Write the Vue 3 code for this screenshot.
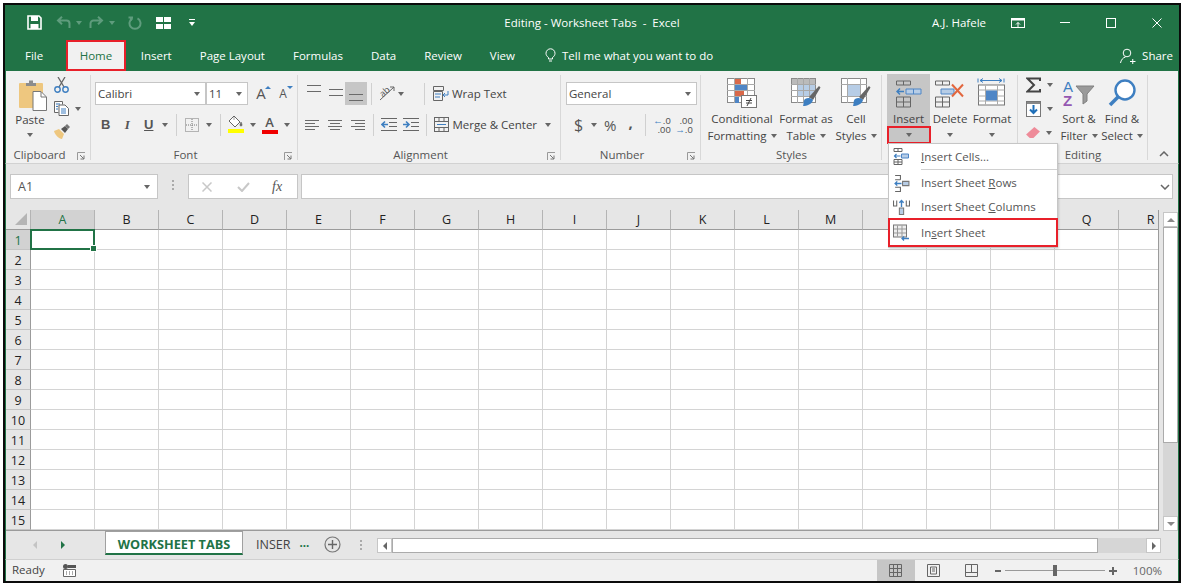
<script setup>
const cols = 'ABCDEFGHIJKLMNOPQR'.split('')
const rows = Array.from({ length: 15 }, (_, i) => i + 1)
const tabs = ['File', 'Home', 'Insert', 'Page Layout', 'Formulas', 'Data', 'Review', 'View']
// these headers sit behind the open dropdown
const covered = ['N', 'O', 'P']
</script>

<template>
  <div class="frame">
    <div class="window">
      <!-- title bar -->
      <header class="titlebar">
        <div class="qat">
          <svg class="save" width="15" height="15" viewBox="0 0 15 15"><path d="M1 1h11l2 2v11H1z" fill="none" stroke="#fff" stroke-width="1.6"/><rect x="4" y="1" width="7" height="5" fill="#fff"/><rect x="3.5" y="9" width="8" height="5" fill="#fff"/></svg>
          <svg class="undo" width="15" height="13" viewBox="0 0 15 13"><path d="M13.500 12V7.500a3 3 0 0 0-3-3H2M6 .8 2 4.500l4 3.700" fill="none" stroke="#5f9c7d" stroke-width="2"/></svg>
          <i class="caret dim"></i>
          <svg class="redo" width="15" height="13" viewBox="0 0 15 13"><path d="M1.500 12V7.500a3 3 0 0 1 3-3H13M9 .8l4 3.700-4 3.700" fill="none" stroke="#5f9c7d" stroke-width="2"/></svg>
          <i class="caret dim"></i>
          <svg class="repeat" width="14" height="14" viewBox="0 0 14 14"><path d="M9.500 2.400a5.500 5.500 0 1 1-5 0M3 1v4M0.500 1.500H5" fill="none" stroke="#5f9c7d" stroke-width="2"/></svg>
          <svg class="custom" width="15" height="12" viewBox="0 0 15 12"><path d="M0 0h7v5H0zM8 0h7v5H8zM0 7h7v5H0zM8 7h7v5H8z" fill="#fff"/></svg>
          <svg class="more" width="6" height="7" viewBox="0 0 6 7"><path d="M0 0h6v1H0zM0 3h6L3 7z" fill="#fff"/></svg>
        </div>
        <div class="doc-title">Editing - Worksheet Tabs&nbsp; -&nbsp; Excel</div>
        <div class="win-right">
          <span class="user">A.J. Hafele</span>
          <svg class="display" width="14" height="10" viewBox="0 0 14 10"><rect x=".5" y=".5" width="13" height="9" fill="none" stroke="#fff"/><path d="M1 1.500h12" stroke="#fff" stroke-width="2"/><path d="M7 9V4.500M5 6.500l2-2 2 2" fill="none" stroke="#fff"/></svg>
          <svg class="minimize" width="10" height="1" viewBox="0 0 10 1"><rect width="10" height="1" fill="#fff"/></svg>
          <svg class="maximize" width="10" height="10" viewBox="0 0 10 10"><rect x=".5" y=".5" width="9" height="9" fill="none" stroke="#fff"/></svg>
          <svg class="close" width="10" height="10" viewBox="0 0 10 10"><path d="M.5.500l9 9M9.500.500l-9 9" stroke="#fff" fill="none"/></svg>
        </div>
      </header>

      <!-- ribbon tabs -->
      <nav class="tabbar">
        <span v-for="t in tabs" :key="t" class="tab" :class="{ active: t === 'Home', file: t === 'File' }">{{ t }}</span>
        <span class="tellme">
          <svg width="11" height="15" viewBox="0 0 11 15"><path d="M3.500 11V9.500C2 8.500 1 7 1 5.300a4.500 4.500 0 0 1 9 0C10 7 9 8.500 7.500 9.500V11zM4 13h3" fill="none" stroke="#fff"/></svg>
          Tell me what you want to do
        </span>
        <span class="share">
          <svg width="16" height="16" viewBox="0 0 16 16"><circle cx="7" cy="5" r="3.800" fill="none" stroke="#fff"/><path d="M.5 15c.5-3 2.500-5.500 5-6M10 13.500h5.500M12.750 11v5" fill="none" stroke="#fff"/></svg>
          Share
        </span>
      </nav>

      <!-- ribbon -->
      <section class="ribbon">
        <div class="group g-clip">
          <div class="body clip-body">
            <div class="paste">
              <svg width="29" height="31" viewBox="0 0 29 31"><rect x="0" y="3" width="24" height="25" rx="1" fill="#eec77f"/><path d="M7 3h3V.5h4V3h3v3H7z" fill="#8c8c8c"/><path d="M14 11.500h8l5.500 5.500v13.500H14z" fill="#fff" stroke="#777"/><path d="M22 12v5h5" fill="none" stroke="#777"/></svg>
              <span class="paste-text">Paste</span>
              <i class="caret"></i>
            </div>
            <div class="clip-tools">
              <svg width="15" height="16" viewBox="0 0 15 16"><path d="M4 0l6 10M11 0 5 10" stroke="#666" fill="none" stroke-width="1.300"/><circle cx="3.500" cy="12.500" r="2.700" fill="none" stroke="#3e7fc1" stroke-width="1.400"/><circle cx="11.500" cy="12.500" r="2.700" fill="none" stroke="#3e7fc1" stroke-width="1.400"/></svg>
              <div class="copy-row">
                <svg width="15" height="15" viewBox="0 0 15 15"><path d="M.5.500h8v3M.5.500v11h4" fill="#fff" stroke="#666"/><path d="M5 4h6l3.500 3.500v7H5z" fill="#fff" stroke="#666"/><path d="M2 3h4M2 5.500h2M2 8h2M7 8h5M7 10h5M7 12h5" stroke="#3e7fc1"/></svg>
                <i class="caret"></i>
              </div>
              <svg width="16" height="15" viewBox="0 0 16 15"><path d="M0 7l5-2 5 5-2 5c-3 0-7-4-8-8z" fill="#eec77f"/><path d="M7 5l4-3 3 3-3 4z" fill="#555"/><path d="M11 2l2-2 3 3-2 2z" fill="#777"/></svg>
            </div>
          </div>
          <div class="glabel"><span>Clipboard</span><svg class="launcher" width="8" height="8" viewBox="0 0 8 8"><path d="M.5 8V.5H8" fill="none" stroke="#999"/><path d="M3 3l4 4M7 3.500V7H3.500" fill="none" stroke="#777"/></svg></div>
        </div>

        <div class="group g-font">
          <div class="body">
            <div class="row r1">
              <div class="combo name">Calibri<i class="caret"></i></div>
              <div class="combo size">11<i class="caret"></i></div>
              <span class="grow-a big">A<i class="up"></i></span>
              <span class="grow-a small">A<i class="down"></i></span>
            </div>
            <div class="row r2">
              <span class="fb bold">B</span>
              <span class="fb italic">I</span>
              <span class="fb under">U</span>
              <i class="caret sp"></i>
              <i class="sep"></i>
              <svg class="bord" width="14" height="14" viewBox="0 0 14 14"><rect x=".5" y=".5" width="13" height="13" fill="none" stroke="#777" stroke-dasharray="1 1"/><path d="M7 1v12M1 7h12" stroke="#777" stroke-dasharray="1 1"/></svg>
              <i class="caret sp2"></i>
              <i class="sep"></i>
              <span class="fill">
                <svg width="15" height="12" viewBox="0 0 15 12"><path d="M6 0 1 5l6 6 5-5z" fill="#fff" stroke="#666"/><path d="M6 0v4M13 6c1 2 1.500 3 .5 4-.8.500-1.800-.5-1.500-1.500z" fill="#666" stroke="#666" stroke-width=".6"/></svg>
                <b class="swatch yellow"></b>
              </span>
              <i class="caret sp3"></i>
              <span class="fill color">
                <span class="fc">A</span>
                <b class="swatch red"></b>
              </span>
              <i class="caret sp4"></i>
            </div>
          </div>
          <div class="glabel"><span>Font</span><svg class="launcher" width="8" height="8" viewBox="0 0 8 8"><path d="M.5 8V.5H8" fill="none" stroke="#999"/><path d="M3 3l4 4M7 3.500V7H3.500" fill="none" stroke="#777"/></svg></div>
        </div>

        <div class="group g-align">
          <div class="body">
            <div class="row r1 al1">
              <span class="al top"><b></b><b></b></span>
              <span class="al mid"><b></b><b></b></span>
              <span class="al bot on"><b></b><b></b></span>
              <i class="sep s1"></i>
              <span class="orient">
                <svg width="16" height="15" viewBox="0 0 16 15"><path d="M1 14 15 1M11 1h4v4" fill="none" stroke="#666"/></svg>
                <span class="ab">ab</span>
              </span>
              <i class="caret o-c"></i>
              <i class="sep s2"></i>
              <svg class="wrap-ic" width="16" height="15" viewBox="0 0 16 15"><path d="M.5.500h10v4H.5zM.5 5.500h9v9H.5z" fill="none" stroke="#666"/><path d="M2 8h6M2 11h5" stroke="#3e7fc1"/><path d="M15 5v4h-5M12 7l-2 2 2 2" fill="none" stroke="#3e7fc1"/></svg>
              <span class="wt first-wt">Wrap Text</span>
            </div>
            <div class="row r2 al2">
              <span class="hl left"><b></b><b></b><b></b><b></b></span>
              <span class="hl cen"><b></b><b></b><b></b><b></b></span>
              <span class="hl right"><b></b><b></b><b></b><b></b></span>
              <i class="sep s3"></i>
              <svg class="ind" width="16" height="13" viewBox="0 0 16 13"><path d="M0 .5h16M8 4.500h8M8 8.500h8M0 12.500h16" stroke="#666"/><path d="M7 6.500H1M4 3.500l-3 3 3 3" fill="none" stroke="#3e7fc1" stroke-width="1.600"/></svg>
              <svg class="ind i2" width="16" height="13" viewBox="0 0 16 13"><path d="M0 .5h16M8 4.500h8M8 8.500h8M0 12.500h16" stroke="#666"/><path d="M0 6.500h6M3 3.500l3 3-3 3" fill="none" stroke="#3e7fc1" stroke-width="1.600"/></svg>
              <i class="sep s4"></i>
              <svg class="wrap-ic" width="15" height="15" viewBox="0 0 15 15"><rect x=".5" y=".5" width="14" height="14" fill="none" stroke="#666"/><path d="M1 4.500h13M1 10.500h13M5 1v3M10 1v3M5 11v3M10 11v3" stroke="#666"/><path d="M3 7.500h9" stroke="#3e7fc1"/></svg>
              <span class="wt">Merge &amp; Center</span>
              <i class="caret m-c"></i>
            </div>
          </div>
          <div class="glabel"><span>Alignment</span><svg class="launcher" width="8" height="8" viewBox="0 0 8 8"><path d="M.5 8V.5H8" fill="none" stroke="#999"/><path d="M3 3l4 4M7 3.500V7H3.500" fill="none" stroke="#777"/></svg></div>
        </div>

        <div class="group g-num">
          <div class="body">
            <div class="row r1">
              <div class="combo general">General<i class="caret"></i></div>
            </div>
            <div class="row r2">
              <span class="dollar">$</span>
              <i class="caret d-c"></i>
              <span class="pct">%</span>
              <span class="comma">,</span>
              <i class="sep n-s"></i>
              <span class="dec one"><em><s>←</s>.0</em><em>.00</em></span>
              <span class="dec two"><em>.00</em><em><s>→</s>.0</em></span>
            </div>
          </div>
          <div class="glabel"><span>Number</span><svg class="launcher" width="8" height="8" viewBox="0 0 8 8"><path d="M.5 8V.5H8" fill="none" stroke="#999"/><path d="M3 3l4 4M7 3.500V7H3.500" fill="none" stroke="#777"/></svg></div>
        </div>

        <div class="group g-styles">
          <div class="body big-row">
            <div class="big w-cf">
              <svg width="30" height="30" viewBox="0 0 30 30"><rect x=".5" y=".5" width="27" height="24" fill="#fff" stroke="#8a8a8a"/><path d="M7.500 0v25M20.500 0v25M0 6.500h28M0 12.500h28M0 18.500h28" stroke="#aaa"/><rect x="8" y="1" width="6" height="5" fill="#d9694a"/><rect x="8" y="7" width="12" height="5" fill="#4f86c6"/><rect x="8" y="13" width="9" height="5" fill="#d9694a"/><rect x="8" y="19" width="4" height="6" fill="#4f86c6"/><rect x="14.500" y="17.500" width="15" height="12" fill="#fff" stroke="#777"/><path d="M19 22.500h6M19 25h6M24 20l-4 8" stroke="#444" fill="none"/></svg>
              <span>Conditional</span><span>Formatting<i class="caret in"></i></span>
            </div>
            <div class="big w-ft">
              <svg width="30" height="30" viewBox="0 0 30 30"><rect x=".5" y=".5" width="24" height="24" fill="#fff" stroke="#8a8a8a"/><rect x="1" y="1" width="23" height="5" fill="#bbb"/><rect x="7" y="7" width="17" height="12" fill="#b7cde6"/><path d="M6.500 0v25M12.500 0v25M18.500 0v25M0 6.500h25M0 12.500h25M0 18.500h25" stroke="#a8a8a8"/><path d="M18 19 28 8l1.500 1.500L22 22z" fill="#666"/><path d="M14 21c3-2 7-1 8 1-1 4-6 6-10 6 1-2 0-5 2-7z" fill="#3e7fc1"/></svg>
              <span>Format as</span><span>Table<i class="caret in"></i></span>
            </div>
            <div class="big w-cs">
              <svg width="30" height="30" viewBox="0 0 30 30"><rect x=".5" y=".5" width="25" height="24" fill="#fff" stroke="#8a8a8a"/><path d="M0 6.500h26M0 18.500h26M6.500 0v25M19.500 0v25" stroke="#a8a8a8"/><rect x="7" y="7" width="12" height="11" fill="#b7cde6"/><path d="M18 19 28 8l1.500 1.500L22 22z" fill="#666"/><path d="M14 21c3-2 7-1 8 1-1 4-6 6-10 6 1-2 0-5 2-7z" fill="#3e7fc1"/></svg>
              <span>Cell</span><span>Styles<i class="caret in"></i></span>
            </div>
          </div>
          <div class="glabel center"><span>Styles</span></div>
        </div>

        <div class="group g-cells">
          <div class="body big-row">
            <div class="big insert">
              <svg width="26" height="29" viewBox="0 0 26 29"><path d="M.5 2.500h14v4H.5zM7.500 2.500v4" fill="none" stroke="#666"/><path d="M10 10.500h15v5H10zM17.500 10.500v5" fill="#b7cde6" stroke="#4f86c6"/><path d="M8 13H1M4 10l-3 3 3 3" fill="none" stroke="#3e7fc1" stroke-width="1.500"/><path d="M.5 18.500h14v10H.5zM7.500 18.500v10M.5 23.500h14" fill="none" stroke="#666"/></svg>
              <span class="label">Insert</span>
              <span class="caret-box"><i class="caret"></i></span>
              <!-- open dropdown -->
              <div class="menu">
                <div class="mi first">
                  <svg width="16" height="17" viewBox="0 0 16 17"><path d="M.5.500h8v3h-8zM4.500.500v3M.5 11.500h8v5h-8zM4.500 11.500v5M.5 14h8" fill="none" stroke="#666"/><path d="M8 6h7v4H8z" fill="#b7cde6" stroke="#4f86c6"/><path d="M7 8H1M3 6 1 8l2 2" fill="none" stroke="#3e7fc1" stroke-width="1.200"/></svg>
                  <span><u>I</u>nsert Cells...</span>
                </div>
                <i class="msep"></i>
                <div class="mi">
                  <svg width="14" height="16" viewBox="0 0 14 16"><path d="M1 .5h5v4M1 4.500h5M1 11.500h5v4H1" fill="none" stroke="#666"/><path d="M8 6h6v4H8z" fill="#b7cde6" stroke="#777"/><path d="M7 8H1M3 6 1 8l2 2" fill="none" stroke="#3e7fc1" stroke-width="1.300"/></svg>
                  <span>Insert Sheet <u>R</u>ows</span>
                </div>
                <div class="mi">
                  <svg width="16" height="15" viewBox="0 0 16 15"><path d="M.5 1v5h3V1M12.500 1v5h3V1" fill="none" stroke="#666"/><path d="M6 8h4v6H6z" fill="#b7cde6" stroke="#777"/><path d="M8 7V1M6 3l2-2 2 2" fill="none" stroke="#3e7fc1" stroke-width="1.300"/></svg>
                  <span>Insert Sheet <u>C</u>olumns</span>
                </div>
                <div class="mi mi-flagged">
                  <svg width="17" height="16" viewBox="0 0 17 16"><rect x=".5" y=".5" width="13" height="12" fill="#eee" stroke="#777"/><path d="M4.500 1v11M9 1v11M1 4.500h12M1 8.500h12" stroke="#999"/><path d="M16 14H9M11 12l-2 2 2 2" fill="none" stroke="#3e7fc1" stroke-width="1.300"/></svg>
                  <span>In<u>s</u>ert Sheet</span>
                </div>
              </div>
            </div>
            <div class="big w-del">
              <svg width="30" height="29" viewBox="0 0 30 29"><path d="M.5 2.500h14v4H.5zM7.500 2.500v4M.5 18.500h14v10H.5zM7.500 18.500v10M.5 23.500h14" fill="none" stroke="#666"/><path d="M6 10.500h13v5H6z" fill="#b7cde6" stroke="#4f86c6"/><path d="M17 6l11 12M28 6 17 18" stroke="#e2673f" stroke-width="2" fill="none"/></svg>
              <span class="label">Delete</span>
              <i class="caret lone"></i>
            </div>
            <div class="big w-fmt">
              <svg width="30" height="29" viewBox="0 0 30 29"><path d="M1 0v4M27 0v4M3 2h22M6 0 3 2l3 2M22 0l3 2-3 2" fill="none" stroke="#3e7fc1"/><rect x="1.500" y="6.500" width="26" height="20" fill="#fff" stroke="#777"/><path d="M1.500 11.500h26M1.500 17.500h26M1.500 22.500h26M8.500 7v19M20.500 7v19" stroke="#aaa"/><rect x="9" y="12" width="11" height="10" fill="#4f86c6"/></svg>
              <span class="label">Format</span>
              <i class="caret lone"></i>
            </div>
          </div>
          <div class="glabel center"></div>
        </div>

        <div class="group g-edit">
          <div class="body big-row">
            <div class="edit-tools">
              <div class="et"><svg width="15" height="16" viewBox="0 0 15 16"><path d="M14 4V1.500H1.500L8 8l-6.500 6.500H14V12" fill="none" stroke="#444" stroke-width="2"/></svg><i class="caret"></i></div>
              <div class="et"><svg width="15" height="16" viewBox="0 0 15 16"><rect x=".5" y=".5" width="14" height="15" fill="#fff" stroke="#777"/><path d="M1 1h13v2H1z" fill="#888"/><path d="M7.500 4v8M4 8.500l3.500 3.500L11 8.500" fill="none" stroke="#1f6fb8" stroke-width="2"/></svg><i class="caret"></i></div>
              <div class="et"><svg width="14" height="12" viewBox="0 0 15 13"><path d="M9 0l6 5-7 7H4L0 8z" fill="#ee8b99"/></svg><i class="caret"></i></div>
            </div>
            <div class="big w-sort">
              <div class="sort-ic">
                <div class="az"><span class="a">A</span><span class="z">Z</span></div>
                <svg width="20" height="20" viewBox="0 0 20 20"><path d="M1 1h18l-7 8v7l-4 3V9z" fill="#9a9a9a" stroke="#808080"/></svg>
              </div>
              <span>Sort &amp;</span><span>Filter<i class="caret in"></i></span>
            </div>
            <div class="big w-find">
              <svg width="28" height="28" viewBox="0 0 28 28"><circle cx="17" cy="11" r="9.500" fill="#fff" stroke="#3e7fc1" stroke-width="2.400"/><path d="M10 18 2 26" stroke="#3e7fc1" stroke-width="3.600"/></svg>
              <span>Find &amp;</span><span>Select<i class="caret in"></i></span>
            </div>
          </div>
          <div class="glabel center"><span>Editing</span></div>
        </div>

        <div class="collapse">
          <svg width="10" height="6" viewBox="0 0 10 6"><path d="M1 5l4-4 4 4" fill="none" stroke="#666" stroke-width="1.500"/></svg>
        </div>
      </section>

      <!-- formula bar -->
      <section class="formula">
        <div class="namebox">A1<i class="caret"></i></div>
        <div class="fdots"><b></b><b></b><b></b></div>
        <div class="fbtns">
          <svg width="10" height="10" viewBox="0 0 10 10"><path d="M.5.500l9 9M9.500.500l-9 9" stroke="#c8c8c8" stroke-width="1.500"/></svg>
          <svg width="13" height="10" viewBox="0 0 13 10"><path d="M1 5l4 4 7-8" fill="none" stroke="#c8c8c8" stroke-width="2"/></svg>
          <span class="fx">fx</span>
        </div>
        <div class="finput">
          <svg width="10" height="6" viewBox="0 0 10 6"><path d="M1 1l4 4 4-4" fill="none" stroke="#666" stroke-width="1.500"/></svg>
        </div>
      </section>

      <!-- sheet -->
      <section class="sheet">
        <div class="grid">
          <div class="head-row">
            <div class="corner"><i></i></div>
            <div v-for="c in cols" :key="c" class="col-h" :class="{ on: c === 'A' }">{{ covered.includes(c) ? '' : c }}</div>
          </div>
          <div v-for="r in rows" :key="r" class="row-l">
            <div class="row-h" :class="{ on: r === 1 }">{{ r }}</div>
            <div v-for="c in cols" :key="c" class="cell">
              <div v-if="r === 1 && c === 'A'" class="sel"><i></i></div>
            </div>
          </div>
        </div>
        <div class="vscroll">
          <div class="sbtn"><i class="tri up"></i></div>
          <div class="vthumb"></div>
          <div class="vtrack"></div>
          <div class="sbtn"><i class="tri down"></i></div>
        </div>
      </section>

      <!-- sheet tabs -->
      <section class="sheetbar">
        <i class="nav prev"></i>
        <i class="nav next"></i>
        <div class="stab">WORKSHEET TABS</div>
        <div class="stab2">INSER</div>
        <div class="ell">...</div>
        <svg class="plus" width="17" height="17" viewBox="0 0 17 17"><circle cx="8.500" cy="8.500" r="7.500" fill="none" stroke="#777" stroke-width="1.200"/><path d="M8.500 4v9M4 8.500h9" stroke="#666" stroke-width="1.400"/></svg>
        <div class="fdots tdots"><b></b><b></b><b></b></div>
        <div class="hscroll">
          <div class="sbtn h"><i class="tri left"></i></div>
          <div class="hthumb"></div>
          <div class="htrack"></div>
          <div class="sbtn h"><i class="tri right"></i></div>
        </div>
      </section>

      <!-- status bar -->
      <footer class="status">
        <span class="ready">Ready</span>
        <svg class="macro" width="13" height="13" viewBox="0 0 13 13"><circle cx="2.500" cy="2.500" r="2.500" fill="#555"/><rect x="5" y="1" width="8" height="3" fill="#555"/><path d="M.5 5.500h12v7H.5z" fill="#fff" stroke="#666"/><path d="M3 8h1M6 8h1M9 8h1M3 10h1M6 10h1M9 10h1" stroke="#555"/></svg>
        <div class="views">
          <div class="view on"><svg width="13" height="13" viewBox="0 0 13 13"><path d="M.5.500h12v12H.5zM4.500 1v11M8.500 1v11M1 4.500h11M1 8.500h11" fill="none" stroke="#666"/></svg></div>
          <div class="view"><svg width="13" height="13" viewBox="0 0 13 13"><path d="M.5.500h12v12H.5z" fill="none" stroke="#666"/><path d="M3.500 3v7h6V3zM5 5h3M5 7h3" fill="none" stroke="#666"/></svg></div>
          <div class="view"><svg width="13" height="13" viewBox="0 0 13 13"><path d="M.5.500h12v12H.5zM1 8.500h11M6.500 1v7" fill="none" stroke="#666"/></svg></div>
        </div>
        <div class="zoom">
          <i class="zm"></i>
          <div class="slider"><b></b></div>
          <i class="zp"></i>
          <span class="pctz">100%</span>
        </div>
      </footer>
    </div>
  </div>
</template>

<style>
html, body {
  margin: 0;
  background: #fff;
}
</style>

<style scoped>
.frame {
  width: 1182px;
  height: 584px;
  box-sizing: border-box;
  padding: 3px 1px 1px 3px;
  font-family: "Open Sans", "Noto Sans", sans-serif;
  font-size: 11.5px;
  color: #444;
  overflow: hidden;
}
.window {
  height: 100%;
  box-sizing: border-box;
  border: 2px solid #0b0b0b;
  display: flex;
  flex-direction: column;
}
.window > * {
  border-left: 1px solid #217346;
  border-right: 1px solid #217346;
  flex: none;
}
i, b, em {
  display: block;
  font-style: normal;
}

/* title bar */
.titlebar {
  height: 35px;
  background: #217346;
  color: #fff;
  display: grid;
  grid-template-columns: 1fr auto 1fr;
  align-items: center;
}
.qat {
  display: flex;
  align-items: center;
  padding-left: 21px;
}
.undo { margin-left: 14px; }
.redo { margin-left: 7px; }
.repeat { margin-left: 13px; }
.custom { margin-left: 14px; }
.more { margin-left: 18px; }
.caret {
  width: 0;
  height: 0;
  flex: none;
  border-left: 3.500px solid transparent;
  border-right: 3.500px solid transparent;
  border-top: 4px solid #666;
}
.caret.dim {
  margin-left: 5px;
  border-top-color: #5f9c7d;
}
.doc-title { font-size: 11.5px; }
.win-right {
  display: flex;
  align-items: center;
  justify-content: flex-end;
}
.user { margin-right: 25px; }
.display { margin-right: 35px; }
.minimize { margin-right: 36px; }
.maximize { margin-right: 36px; }
.close { margin-right: 16px; }

/* tabs */
.tabbar {
  height: 31px;
  background: #217346;
  color: #fff;
  display: flex;
  align-items: center;
  box-sizing: border-box;
}
.tab {
  height: 100%;
  display: flex;
  align-items: center;
  padding: 0 14px;
  box-sizing: border-box;
}
.tab.file {
  padding: 0 23px 0 19px;
}
.tab.active {
  background: #f1f1f1;
  color: #217346;
  border: 2px solid #e8202a;
  padding: 0 11.500px;
  margin-right: 1px;
}
.tellme {
  display: flex;
  align-items: center;
  gap: 6px;
  margin-left: 16px;
}
.share {
  margin-left: auto;
  margin-right: 5px;
  display: flex;
  align-items: center;
  gap: 6px;
}

/* ribbon */
.ribbon {
  height: 93px;
  background: #f1f1f1;
  border-bottom: 1px solid #d2d2d2;
  box-sizing: border-box;
  display: flex;
  padding-top: 4px;
}
.group {
  height: 85px;
  box-sizing: border-box;
  border-right: 1px solid #d8d8d8;
  display: flex;
  flex-direction: column;
  flex: none;
}
.g-clip { width: 85px; }
.g-font { width: 207px; }
.g-align { width: 263px; }
.g-num { width: 140px; }
.g-styles { width: 181px; }
.g-cells { width: 136px; }
.g-edit { width: 130px; }
.body {
  height: 71px;
  flex: none;
  box-sizing: border-box;
  padding-top: 7px;
}
.glabel {
  height: 14px;
  line-height: 18px;
  display: flex;
  color: #555;
  padding-right: 5px;
}
.glabel span {
  flex: 1;
  text-align: center;
  padding-right: 4px;
}
.glabel.center {
  padding: 0 0 0 1px;
}
.glabel.center span { padding-right: 0; }
.launcher {
  margin-top: 6px;
  flex: none;
}
.row {
  display: flex;
  align-items: center;
  height: 23px;
}
.r2 { margin-top: 8px; }
.sep {
  width: 1px;
  height: 22px;
  background: #d0d0d0;
  flex: none;
}

/* clipboard */
.clip-body {
  display: flex;
  padding-top: 5px;
  padding-left: 12px;
}
.paste {
  width: 30px;
  display: flex;
  flex-direction: column;
  align-items: center;
  flex: none;
}
.paste-text {
  margin: 0 0 0 -6px;
  line-height: 17px;
}
.paste .caret { margin: 5px 0 0 -6px; }
.clip-tools {
  margin-left: 6px;
  margin-top: -3px;
  display: flex;
  flex-direction: column;
  gap: 8px;
}
.copy-row {
  display: flex;
  align-items: center;
  gap: 6px;
}

/* font */
.g-font .r1, .g-num .r1 { padding-left: 4px; }
.combo {
  height: 23px;
  box-sizing: border-box;
  background: #fff;
  border: 1px solid #c6c6c6;
  display: flex;
  align-items: center;
  justify-content: space-between;
  padding: 0 5px 0 2px;
}
.name { width: 111px; }
.size { width: 42px; margin-left: 0; }
.grow-a {
  position: relative;
  font-size: 15px;
  color: #555;
  width: 22px;
  text-align: center;
}
.grow-a.big { margin-left: 2px; }
.grow-a.small { font-size: 12px; }
.grow-a .up, .grow-a .down {
  position: absolute;
  top: 1px;
  right: 1px;
  border-left: 3px solid transparent;
  border-right: 3px solid transparent;
}
.grow-a .up { border-bottom: 3px solid #3e7fc1; }
.grow-a .down { border-top: 3px solid #3e7fc1; }
.g-font .r2 { padding-left: 4px; }
.fb {
  width: 21.500px;
  text-align: center;
  font-family: "Liberation Sans", sans-serif;
  font-size: 13px;
  color: #555;
}
.bold { font-weight: 700; }
.italic { font-style: italic; font-family: "Liberation Serif", serif; font-weight: 700; }
.under { text-decoration: underline; font-weight: 700; }
.sp { margin: 0 8px 0 2px; }
.g-font .sep { height: 22px; }
.bord { margin-left: 8px; }
.sp2 { margin: 0 8px 0 7px; }
.fill {
  display: flex;
  flex-direction: column;
  align-items: center;
  width: 16px;
  margin-left: 7px;
}
.swatch {
  width: 16px;
  height: 4px;
  margin-top: 1px;
}
.yellow { background: #ffff00; }
.red { background: #f00000; }
.sp3 { margin-left: 6px; }
.fill.color { margin-left: 6px; }
.fc {
  font-size: 13px;
  line-height: 13px;
  font-weight: 600;
  color: #555;
}
.sp4 { margin-left: 6px; }

/* alignment */
.al1 { padding-left: 7px; }
.al {
  width: 17px;
  display: flex;
  flex-direction: column;
  gap: 5px;
  align-items: center;
  margin-right: 5px;
  height: 23px;
  box-sizing: border-box;
}
.al b {
  width: 14px;
  height: 1px;
  background: #6a6a6a;
}
.al.top { padding-top: 3px; }
.al.mid { padding-top: 7px; margin-right: 1px; }
.al.bot {
  width: 22px;
  padding-top: 12px;
  margin-right: 0;
}
.al.on { background: #c6c6c6; }
.s1 { margin: 0 7px 0 4px; }
.orient {
  position: relative;
  width: 16px;
  height: 15px;
  flex: none;
}
.ab {
  position: absolute;
  left: 0;
  top: 0;
  font-size: 9px;
  line-height: 11px;
  color: #555;
  transform: rotate(-42deg);
}
.o-c { margin-left: 3px; }
.s2 { margin: 0 8px 0 20px; }
.wrap-ic { flex: none; }
.wt { margin-left: 4px; white-space: nowrap; }
.first-wt { margin-left: 3px; }
.al2 { padding-left: 7px; }
.hl {
  width: 15px;
  margin-right: 7.500px;
  display: flex;
  flex-direction: column;
  gap: 2px;
}
.hl b {
  height: 1px;
  background: #6a6a6a;
  width: 14px;
}
.hl.left b:nth-child(even) { width: 10px; }
.hl.cen { align-items: center; }
.hl.cen b:nth-child(even) { width: 10px; }
.hl.right { align-items: flex-end; }
.hl.right b:nth-child(even) { width: 10px; }
.s3 { margin: 0 7px 0 0; }
.ind { flex: none; }
.i2 { margin-left: 6px; }
.s4 { margin: 0 7px 0 7px; }
.m-c { margin-left: 8px; }

/* number */
.general { width: 131px; margin-left: 1px; padding-left: 2px; }
.g-num .r2 { padding-left: 13px; }
.dollar { font-size: 16px; width: 10px; color: #555; }
.d-c { margin-left: 7px; }
.pct { font-size: 15px; margin-left: 7px; color: #555; }
.comma { font-size: 15px; font-weight: 700; margin-left: 12px; margin-top: -6px; color: #555; }
.n-s { margin-left: 12px; }
.dec {
  display: flex;
  flex-direction: column;
  align-items: flex-end;
  font-family: "Liberation Sans", sans-serif;
  font-size: 9.500px;
  line-height: 9px;
  color: #555;
  width: 15px;
  margin-left: 10px;
}
.dec.two { margin-left: 7px; }
.dec s {
  text-decoration: none;
  color: #3e7fc1;
  font-weight: 700;
}

/* big buttons */
.big-row {
  display: flex;
  padding-top: 3px;
}
.big {
  display: flex;
  flex-direction: column;
  align-items: center;
  flex: none;
  line-height: 17px;
  white-space: nowrap;
}
.big > svg { height: 30px; margin-bottom: 2px; flex: none; }
.in {
  display: inline-block;
  margin-left: 4px;
  vertical-align: 2px;
}
.w-cf { width: 72px; margin-left: 5px; }
.w-ft { width: 52px; margin-left: 2px; }
.w-cs { width: 40px; margin-left: 4px; }
.insert {
  width: 43px;
  margin-left: 5px;
  margin-top: -4px;
  padding-top: 4px;
  height: 69px;
  box-sizing: border-box;
  background: #c6c6c6;
  position: relative;
}
.insert > svg { margin-bottom: 3px; }
.insert .label { line-height: 15px; }
.caret-box {
  width: 44px;
  height: 18px;
  margin-top: 0;
  box-sizing: border-box;
  border: 2px solid #e8202a;
  display: flex;
  align-items: center;
  justify-content: center;
  flex: none;
}
.lone { margin-top: 7px; }
.w-del { width: 40px; margin-left: 0; }
.w-del .label, .w-fmt .label { line-height: 15px; margin-top: 1px; }
.w-fmt { width: 40px; margin-left: 2px; }

/* dropdown */
.menu {
  position: absolute;
  z-index: 10;
  top: 69px;
  left: 1px;
  width: 170px;
  height: 105px;
  box-sizing: border-box;
  background: #fff;
  border: 1px solid #c6c6c6;
  box-shadow: 1px 1px 2px rgba(0, 0, 0, .15);
  display: flex;
  flex-direction: column;
  color: #555;
  line-height: 16px;
}
.mi {
  display: flex;
  align-items: center;
  height: 24px;
  flex: none;
  position: relative;
  background: #fff;
}
.mi svg {
  width: 17px;
  height: 17px;
  margin: 0 0 0 4px;
  flex: none;
}
.mi span { margin-left: 11px; }
.mi.first { height: 25px; }
.msep {
  height: 1px;
  background: #d0d0d0;
  margin: 0 0 1px 32px;
  flex: none;
}
.mi-flagged {
  height: 29px;
  margin: -1px -1px -1px;
  border: 2px solid #e8202a;
  box-sizing: border-box;
}
.mi-flagged svg { margin-left: 3px; }

/* editing */
.edit-tools {
  display: flex;
  flex-direction: column;
  margin: -1px 0 0 8px;
  gap: 8px;
  flex: none;
}
.et {
  display: flex;
  align-items: center;
  gap: 6px;
  height: 16px;
}
.w-sort { width: 40px; margin-left: 6px; }
.sort-ic {
  width: 32px;
  height: 30px;
  margin-bottom: 2px;
  display: flex;
  align-items: flex-end;
  flex: none;
}
.az {
  display: flex;
  flex-direction: column;
  width: 12px;
  font-family: "Liberation Sans", sans-serif;
  font-size: 15px;
  line-height: 14px;
  flex: none;
}
.az .a { color: #3e7fc1; }
.az .z {
  color: #9558b2;
  font-weight: 700;
}
.sort-ic svg { margin: 0 0 3px 0; }
.w-find { width: 44px; margin-left: 1px; }
.collapse {
  flex: 1;
  display: flex;
  align-items: flex-end;
  justify-content: center;
  padding: 0 0 6px 2px;
}

/* formula */
.formula {
  height: 46px;
  background: #e6e6e6;
  display: flex;
  align-items: flex-start;
  padding-top: 10px;
  box-sizing: border-box;
}
.namebox {
  margin-left: 4px;
  width: 148px;
  height: 25px;
  box-sizing: border-box;
  background: #fff;
  border: 1px solid #c6c6c6;
  display: flex;
  align-items: center;
  justify-content: space-between;
  padding: 0 7px;
  font-size: 12.500px;
  color: #555;
}
.fdots {
  display: flex;
  flex-direction: column;
  gap: 2px;
  margin: 6px 14px 0 14px;
}
.fdots b {
  width: 2px;
  height: 2px;
  background: #aaa;
}
.fbtns {
  width: 110px;
  height: 25px;
  box-sizing: border-box;
  background: #fff;
  border: 1px solid #c6c6c6;
  display: flex;
  align-items: center;
  padding-left: 13px;
  gap: 25px;
}
.fx {
  font-family: "Liberation Serif", serif;
  font-style: italic;
  font-size: 14px;
  margin-left: -3px;
  color: #555;
}
.finput {
  margin-left: 3px;
  width: 872px;
  height: 25px;
  box-sizing: border-box;
  background: #fff;
  border: 1px solid #c6c6c6;
  display: flex;
  align-items: center;
  justify-content: flex-end;
  padding-right: 2px;
}

/* sheet */
.sheet {
  height: 321px;
  background: #e6e6e6;
  display: flex;
}
.grid {
  width: 1153px;
  height: 321px;
  flex: none;
  overflow: hidden;
  box-sizing: border-box;
  border-right: 1px solid #9b9b9b;
  border-bottom: 1px solid #9b9b9b;
  font-size: 12.500px;
  color: #222;
}
.head-row, .row-l {
  display: flex;
  height: 20px;
}
.corner {
  width: 25px;
  flex: none;
  box-sizing: border-box;
  border-bottom: 1px solid #9b9b9b;
  border-right: 1px solid #b4b4b4;
  padding: 3px 0 0 9px;
}
.corner i {
  width: 0;
  height: 0;
  border-left: 12px solid transparent;
  border-bottom: 12px solid #b5b5b5;
}
.col-h {
  width: 64px;
  flex: none;
  box-sizing: border-box;
  text-align: center;
  line-height: 19px;
  border-bottom: 1px solid #9b9b9b;
  border-right: 1px solid #b4b4b4;
}
.col-h.on {
  background: #d2d2d2;
  color: #217346;
}
.row-h {
  width: 25px;
  flex: none;
  box-sizing: border-box;
  text-align: center;
  line-height: 21px;
  border-right: 1px solid #9b9b9b;
  border-bottom: 1px solid #c4c4c4;
}
.row-h.on {
  background: #d2d2d2;
  color: #217346;
}
.cell {
  width: 64px;
  flex: none;
  box-sizing: border-box;
  background: #fff;
  border-right: 1px solid #d4d4d4;
  border-bottom: 1px solid #d4d4d4;
  position: relative;
}
.sel {
  position: absolute;
  inset: -1px -1px -1px -1px;
  border: 2px solid #217346;
  z-index: 2;
}
.sel i {
  position: absolute;
  right: -4px;
  bottom: -4px;
  width: 5px;
  height: 5px;
  background: #217346;
  border: 1px solid #fff;
}
.vscroll {
  flex: 1;
  display: flex;
  flex-direction: column;
  align-items: flex-start;
  padding: 2px 0 0 4px;
  box-sizing: border-box;
}
.sbtn {
  width: 15px;
  height: 15px;
  box-sizing: border-box;
  background: #fff;
  border: 1px solid #c6c6c6;
  display: flex;
  align-items: center;
  justify-content: center;
  flex: none;
}
.vthumb {
  width: 15px;
  height: 216px;
  box-sizing: border-box;
  background: #fff;
  border: 1px solid #ababab;
  flex: none;
}
.vtrack {
  width: 15px;
  height: 73px;
  background: #d6d6d6;
  flex: none;
}
.tri {
  width: 0;
  height: 0;
}
.tri.up, .tri.down {
  border-left: 4px solid transparent;
  border-right: 4px solid transparent;
}
.tri.up { border-bottom: 4px solid #8a8a8a; }
.tri.down { border-top: 4px solid #8a8a8a; }
.tri.left, .tri.right {
  border-top: 4px solid transparent;
  border-bottom: 4px solid transparent;
}
.tri.left { border-right: 4px solid #666; }
.tri.right { border-left: 4px solid #666; }

/* sheet tabs */
.sheetbar {
  height: 28px;
  background: #e6e6e6;
  display: flex;
  align-items: flex-start;
  box-sizing: border-box;
  position: relative;
}
.nav {
  width: 0;
  height: 0;
  margin-top: 10px;
  border-top: 4px solid transparent;
  border-bottom: 4px solid transparent;
}
.prev {
  margin-left: 27px;
  border-right: 4px solid #c4c4c4;
}
.next {
  margin-left: 24px;
  border-left: 4px solid #217346;
}
.stab {
  margin-left: 40px;
  width: 138px;
  height: 24px;
  box-sizing: border-box;
  background: #fff;
  border: 1px solid #a0a0a0;
  border-top: 1px solid #a0a0a0;
  border-bottom: 2px solid #217346;
  color: #217346;
  font-weight: 700;
  font-size: 12.700px;
  text-align: center;
  line-height: 25px;
}
.stab2 {
  margin-left: 13px;
  line-height: 27px;
  font-size: 12.500px;
  color: #444;
}
.ell {
  margin-left: 9px;
  line-height: 24px;
  font-weight: 700;
  color: #217346;
}
.plus {
  margin: 5px 0 0 15px;
  flex: none;
}
.tdots { margin: 9px 0 0 19px; }
.hscroll {
  margin: 7px 0 0 15px;
  display: flex;
}
.sbtn.h { height: 15px; }
.hthumb {
  width: 706px;
  height: 15px;
  box-sizing: border-box;
  background: #fff;
  border: 1px solid #ababab;
}
.htrack {
  width: 48px;
  height: 15px;
  background: #d6d6d6;
}

/* status */
.status {
  height: 22px;
  background: #f1f1f1;
  box-sizing: border-box;
  border-top: 1px solid #d0d0d0;
  display: flex;
  align-items: center;
}
.ready { margin: -2px 0 0 6px; }
.macro { margin-left: 18px; }
.views {
  margin-left: 801px;
  display: flex;
  height: 100%;
}
.view {
  width: 38px;
  display: flex;
  align-items: center;
  justify-content: center;
}
.view.on { background: #c6c6c6; }
.zoom {
  display: flex;
  align-items: center;
  margin-left: 4px;
}
.zm {
  width: 6px;
  height: 2px;
  background: #666;
}
.slider {
  width: 100px;
  height: 1px;
  background: #999;
  margin: 0 4px 0 4px;
  position: relative;
}
.slider b {
  position: absolute;
  left: 48px;
  top: -5px;
  width: 4px;
  height: 11px;
  background: #666;
}
.zp {
  width: 8px;
  height: 8px;
  background:
    linear-gradient(#666, #666) center / 8px 2px no-repeat,
    linear-gradient(#666, #666) center / 2px 8px no-repeat;
}
.pctz {
  margin-left: 16px;
  color: #666;
}
</style>
